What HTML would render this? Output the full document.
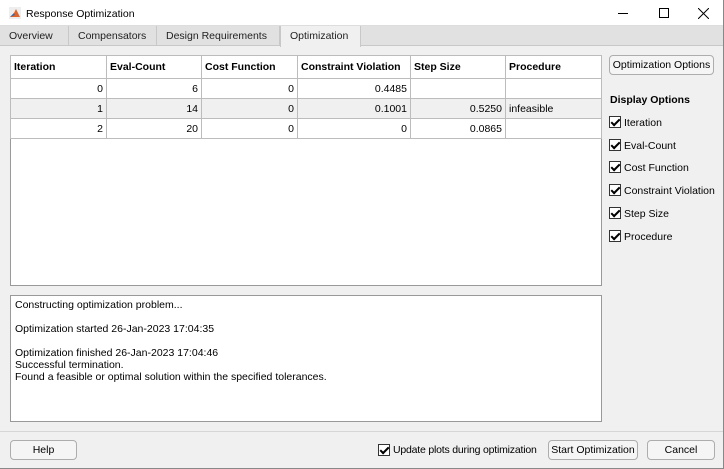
<!DOCTYPE html>
<html><head><style>
*{margin:0;padding:0;box-sizing:border-box}
body{width:724px;height:469px;position:relative;background:#f0f0f0;font-family:"Liberation Sans",Arial,sans-serif;font-size:10.5px;color:#000;overflow:hidden}
.a{position:absolute}
.title{left:0;top:0;width:724px;height:26px;background:#fff;border-bottom:1px solid #ddd}
.tabs{left:0;top:26px;width:724px;height:20px;background:#e1e1e1;border-bottom:1px solid #c8c8c8}
.tab{position:absolute;top:0;height:20px;line-height:21px;padding-left:9px;border-right:1px solid #c8c8c8;font-size:10.5px;color:#222}
table{border-collapse:collapse;position:absolute;left:10px;top:55px;table-layout:fixed}
td{border:1px solid #bcbcbc;height:20px;padding:0 3px;font-size:10.5px}
th{border:1px solid #bcbcbc;height:23px;padding:0 3px;text-align:left;font-size:10.5px;font-weight:bold}
td.r{text-align:right}
tr.g td{background:#f0f0f0}
.btn{position:absolute;border:1px solid #adadad;border-radius:4px;background:#f5f5f5;text-align:center;font-size:10.5px;line-height:18px;white-space:nowrap}
.cb{position:absolute;width:12px;height:12px;border:1px solid #333;background:#fff}
.cb:after{content:"";position:absolute;left:3px;top:0px;width:3px;height:7px;border:solid #000;border-width:0 2px 2px 0;transform:rotate(45deg)}
.lbl{position:absolute;font-size:10.5px;white-space:nowrap}
</style></head><body>
<div class="a title">
 <svg class="a" style="left:9px;top:7px" width="12" height="12"><rect width="12" height="12" fill="#eee"/><path d="M1 10 L5 6 L7 2 L9 6 L11 10 Z" fill="#e0632a"/><path d="M1 10 L5 6 L6 8 Z" fill="#2f6fb5"/></svg>
 <div class="a" style="left:26px;top:8px;font-size:10.5px">Response Optimization</div>
 <div class="a" style="left:618px;top:13px;width:10px;height:1px;background:#000"></div>
 <div class="a" style="left:659px;top:8px;width:10px;height:10px;border:1px solid #000"></div>
 <svg class="a" style="left:698px;top:8px" width="11" height="11"><path d="M0 0L11 11M11 0L0 11" stroke="#000" stroke-width="1"/></svg>
</div>
<div class="a tabs">
 <div class="tab" style="left:0;width:69px">Overview</div>
 <div class="tab" style="left:69px;width:88px">Compensators</div>
 <div class="tab" style="left:157px;width:123px">Design Requirements</div>
 <div class="tab" style="left:280px;width:81px;background:#f0f0f0;height:21px;border-left:1px solid #c8c8c8">Optimization</div>
</div>
<div class="a" style="left:10px;top:55px;width:592px;height:231px;background:#fff;border:1px solid #999"></div>
<table>
<colgroup><col style="width:96px"><col style="width:95px"><col style="width:96px"><col style="width:113px"><col style="width:95px"><col style="width:96px"></colgroup>
<tr><th>Iteration</th><th>Eval-Count</th><th>Cost Function</th><th>Constraint Violation</th><th>Step Size</th><th>Procedure</th></tr>
<tr><td class="r">0</td><td class="r">6</td><td class="r">0</td><td class="r">0.4485</td><td></td><td></td></tr>
<tr class="g"><td class="r">1</td><td class="r">14</td><td class="r">0</td><td class="r">0.1001</td><td class="r">0.5250</td><td>infeasible</td></tr>
<tr><td class="r">2</td><td class="r">20</td><td class="r">0</td><td class="r">0</td><td class="r">0.0865</td><td></td></tr>
</table>
<div class="a" style="left:10px;top:295px;width:592px;height:127px;background:#fff;border:1px solid #999;padding:3px 4px;line-height:12px;font-size:10.5px">
Constructing optimization problem...<br><br>Optimization started 26-Jan-2023 17:04:35<br><br>Optimization finished 26-Jan-2023 17:04:46<br>Successful termination.<br>Found a feasible or optimal solution within the specified tolerances.
</div>
<div class="btn" style="left:609px;top:55px;width:105px;height:20px">Optimization Options</div>
<div class="lbl" style="left:610px;top:94px;font-weight:bold">Display Options</div>
<div class="cb" style="left:609px;top:116px"></div><div class="lbl" style="left:624px;top:117px">Iteration</div>
<div class="cb" style="left:609px;top:139px"></div><div class="lbl" style="left:624px;top:140px">Eval-Count</div>
<div class="cb" style="left:609px;top:161px"></div><div class="lbl" style="left:624px;top:162px">Cost Function</div>
<div class="cb" style="left:609px;top:184px"></div><div class="lbl" style="left:624px;top:185px">Constraint Violation</div>
<div class="cb" style="left:609px;top:207px"></div><div class="lbl" style="left:624px;top:208px">Step Size</div>
<div class="cb" style="left:609px;top:230px"></div><div class="lbl" style="left:624px;top:231px">Procedure</div>
<div class="a" style="left:0;top:431px;width:724px;height:1px;background:#d6d6d6"></div>
<div class="btn" style="left:10px;top:440px;width:67px;height:20px">Help</div>
<div class="cb" style="left:378px;top:444px"></div><div class="lbl" style="left:393px;top:444px;letter-spacing:-0.2px">Update plots during optimization</div>
<div class="btn" style="left:548px;top:440px;width:90px;height:20px">Start Optimization</div>
<div class="btn" style="left:647px;top:440px;width:68px;height:20px">Cancel</div>
<div class="a" style="left:723px;top:0;width:1px;height:469px;background:#888"></div>
<div class="a" style="left:0;top:468px;width:724px;height:1px;background:#888"></div>
</body></html>
